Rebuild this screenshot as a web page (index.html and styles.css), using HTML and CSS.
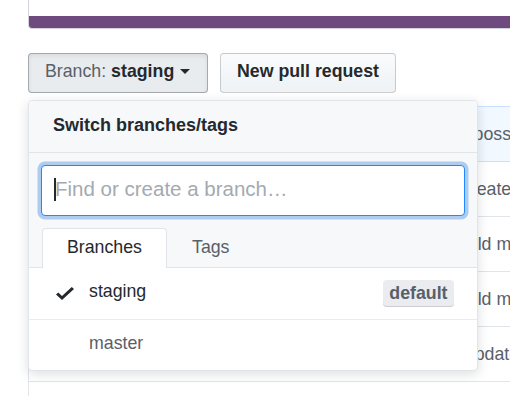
FILE: index.html
```html
<!DOCTYPE html>
<html lang="en">
<head>
<meta charset="utf-8">
<title>Branch selector</title>
<link rel="stylesheet" href="styles.css">
</head>
<body>
<div class="page">
  <div class="summary"><div class="lang-bar"></div></div>

  <div class="actions">
    <button class="btn btn-selected" type="button"><span class="btn-label">Branch:</span>&nbsp;<span>staging</span><span class="caret"></span></button>
    <button class="btn btn-wide" type="button">New pull request</button>

    <div class="menu">
      <div class="menu-header">Switch branches/tags</div>
      <div class="menu-filter">
        <div class="filter-field"><input class="filter-input" type="text" placeholder="Find or create a branch…"></div>
        <div class="tabs">
          <div class="tab selected">Branches</div>
          <div class="tab">Tags</div>
        </div>
      </div>
      <div class="menu-list">
        <div class="menu-item">
          <svg class="check" width="18" height="13" viewBox="0 3.5 12 9.5" preserveAspectRatio="none"><path d="M12 5l-8 8-4-4 1.5-1.5L4 10l6.5-6.5L12 5z" fill="#24292e"/></svg>
          <span class="item-name">staging</span>
          <span class="badge">default</span>
        </div>
        <div class="menu-item">
          <span class="check"></span>
          <span class="item-name muted">master</span>
        </div>
      </div>
    </div>
  </div>

  <div class="files">
    <div class="tease">
      <span class="tease-lead"><span class="avatar"></span></span>
      <span class="msg">Fix possible race in deploy task</span>
    </div>
    <div class="file-table">
      <div class="file-row">
        <span class="file-name"><svg class="file-icon" width="18" height="18" viewBox="0 0 14 16"><path d="M13 4H7V3c0-.66-.31-1-1-1H1c-.55 0-1 .45-1 1v10c0 .55.45 1 1 1h12c.55 0 1-.45 1-1V5c0-.55-.45-1-1-1zM6 4H1V3h5v1z" fill="#79b8ff"/></svg></span>
        <span class="msg">“Create release config”</span>
      </div>
      <div class="file-row">
        <span class="file-name"><svg class="file-icon" width="18" height="18" viewBox="0 0 14 16"><path d="M13 4H7V3c0-.66-.31-1-1-1H1c-.55 0-1 .45-1 1v10c0 .55.45 1 1 1h12c.55 0 1-.45 1-1V5c0-.55-.45-1-1-1zM6 4H1V3h5v1z" fill="#79b8ff"/></svg></span>
        <span class="msg">Build mix release</span>
      </div>
      <div class="file-row">
        <span class="file-name"><svg class="file-icon" width="18" height="18" viewBox="0 0 14 16"><path d="M13 4H7V3c0-.66-.31-1-1-1H1c-.55 0-1 .45-1 1v10c0 .55.45 1 1 1h12c.55 0 1-.45 1-1V5c0-.55-.45-1-1-1zM6 4H1V3h5v1z" fill="#79b8ff"/></svg></span>
        <span class="msg">Build mix tests</span>
      </div>
      <div class="file-row">
        <span class="file-name"><svg class="file-icon" width="18" height="18" viewBox="0 0 12 16"><path d="M6 5H2V4h4v1zM2 8h7V7H2v1zm0 2h7V9H2v1zm0 2h7v-1H2v1zm10-7.5V14c0 .55-.45 1-1 1H1c-.55 0-1-.45-1-1V2c0-.55.45-1 1-1h7.5L12 4.5zM11 5L8 2H1v12h10V5z" fill="#6a737d"/></svg></span>
        <span class="msg">&nbsp;&nbsp;Update mix.lock</span>
      </div>
      <div class="file-row">
        <span class="file-name"><svg class="file-icon" width="18" height="18" viewBox="0 0 12 16"><path d="M6 5H2V4h4v1zM2 8h7V7H2v1zm0 2h7V9H2v1zm0 2h7v-1H2v1zm10-7.5V14c0 .55-.45 1-1 1H1c-.55 0-1-.45-1-1V2c0-.55.45-1 1-1h7.5L12 4.5zM11 5L8 2H1v12h10V5z" fill="#6a737d"/></svg></span>
        <span class="msg">Initial commit</span>
      </div>
    </div>
  </div>
</div>
</body>
</html>
```

FILE: styles.css
```css
* { box-sizing: border-box; }

html, body {
  margin: 0;
  padding: 0;
  overflow: hidden;
  background: #fff;
}

body {
  width: 510px;
  height: 396px;
  font-family: "Liberation Sans", Arial, Helvetica, sans-serif;
  font-size: 17.75px;
  color: #24292e;
}

.page {
  width: 760px;
  padding-left: 28px;
}

.summary {
  height: 29px;
  border: 1px solid #d1d5da;
  border-top: 0;
  border-radius: 0 0 4px 4px;
  display: flex;
  flex-direction: column;
  justify-content: flex-end;
  overflow: hidden;
}

.lang-bar {
  height: 12px;
  background: #6e4a7e;
}

.actions {
  position: relative;
  margin-top: 24px;
  height: 40px;
  display: flex;
  gap: 12px;
}

.btn {
  height: 40px;
  padding: 0 16px 3px;
  border: 1px solid rgba(27, 31, 35, 0.2);
  border-radius: 4px;
  background: linear-gradient(#fafbfc, #eff3f6 90%);
  font-family: "Liberation Sans", Arial, Helvetica, sans-serif;
  font-size: 17.75px;
  font-weight: bold;
  color: #24292e;
  display: inline-flex;
  align-items: center;
  white-space: nowrap;
}

.btn-wide {
  width: 176px;
}

.btn-selected {
  width: 180px;
  background: #e9ecef;
  border-color: rgba(27, 31, 35, 0.33);
  box-shadow: inset 0 2px 4px rgba(27, 31, 35, 0.08);
}

.btn-label {
  font-weight: normal;
  color: #586069;
}

.caret {
  width: 0;
  height: 0;
  margin-left: 6px;
  border-top: 5px solid #24292e;
  border-left: 5px solid transparent;
  border-right: 5px solid transparent;
}

.menu {
  position: absolute;
  top: 47px;
  left: 0;
  z-index: 10;
  width: 450px;
  background: #fff;
  border: 1px solid #e1e4e8;
  border-radius: 4px;
  box-shadow: 0 3px 12px rgba(27, 31, 35, 0.15);
  overflow: hidden;
}

.menu-header {
  height: 52px;
  padding: 0 24px 2px;
  display: flex;
  align-items: center;
  background: #f6f8fa;
  border-bottom: 1px solid #e1e4e8;
  font-size: 18px;
  font-weight: bold;
}

.menu-filter {
  background: #f6f8fa;
  padding: 12px 12px 0;
}

.filter-field {
  position: relative;
}

.filter-field::before {
  content: "";
  position: absolute;
  left: 13px;
  top: 13px;
  width: 2px;
  height: 23px;
  background: #24292e;
}

.filter-input {
  display: block;
  width: 100%;
  height: 51px;
  padding: 0 13px 4px;
  border: 1px solid #2188ff;
  border-radius: 4px;
  box-shadow: 0 0 0 3.5px rgba(3, 102, 214, 0.3);
  background: #fff;
  font-family: "Liberation Sans", Arial, Helvetica, sans-serif;
  font-size: 20.5px;
  color: #24292e;
  caret-color: transparent;
  outline: none;
}

.filter-input::placeholder {
  color: #a3aab1;
}

.tabs {
  display: flex;
  margin: 12px -12px 0;
  padding-left: 13px;
  border-bottom: 1px solid #e1e4e8;
}

.tab {
  height: 40px;
  margin-bottom: -1px;
  padding: 0 24px 2px;
  display: flex;
  align-items: center;
  border: 1px solid transparent;
  border-bottom: 0;
  border-radius: 4px 4px 0 0;
  color: #586069;
}

.tab.selected {
  background: #fff;
  border-color: #e1e4e8;
  color: #24292e;
}

.menu-item {
  height: 52px;
  padding: 0 23px 0 27px;
  display: flex;
  align-items: center;
  border-bottom: 1px solid #eaecef;
}

.menu-item:last-child {
  height: 50px;
  border-bottom: 0;
}

.check {
  display: block;
  width: 18px;
  height: 13px;
  margin-right: 15px;
  flex: none;
}

.item-name {
  padding-bottom: 4px;
  color: #24292e;
}

.item-name.muted {
  color: #586069;
}

.badge {
  margin-left: auto;
  height: 27px;
  padding: 0 6.5px;
  line-height: 26px;
  font-weight: bold;
  color: #586069;
  background: #eaecef;
  border-radius: 4px;
  box-shadow: inset 0 -1px 0 rgba(27, 31, 35, 0.15);
}

.files {
  margin-top: 13px;
  width: 720px;
}

.tease {
  height: 56px;
  display: flex;
  align-items: center;
  background: #f1f8ff;
  border: 1px solid #c8e1ff;
  border-radius: 4px 4px 0 0;
  white-space: nowrap;
  color: #586069;
}

.tease-lead {
  width: 416px;
  flex: none;
  padding-left: 16px;
  display: flex;
  align-items: center;
}

.avatar {
  width: 24px;
  height: 24px;
  border-radius: 4px;
  background: #d1d5da;
}

.file-table {
  border: 1px solid #e1e4e8;
  border-top: 0;
}

.file-row {
  height: 55px;
  display: flex;
  align-items: center;
  border-bottom: 1px solid #e1e4e8;
  white-space: nowrap;
  color: #586069;
}

.file-name {
  width: 423px;
  flex: none;
  padding-left: 16px;
  display: flex;
  align-items: center;
}

.file-icon {
  display: block;
}

.msg {
  white-space: nowrap;
}
```
